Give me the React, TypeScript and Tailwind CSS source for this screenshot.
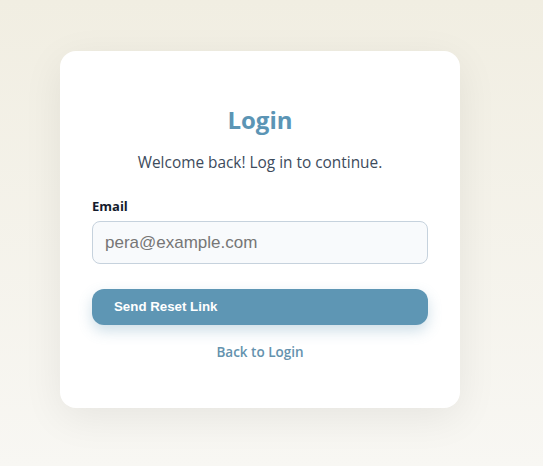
import * as React from "react";

export default function App() {
  const [email, setEmail] = React.useState("");

  return (
    <div className="min-h-screen w-full bg-gradient-to-b from-[#f1eee2] to-[#f8f7f3] pt-[51px] pl-[60px] font-['Open_Sans','Noto_Sans',sans-serif]">
      <div className="w-[400px] rounded-2xl bg-white px-8 pt-[53px] pb-[45px] shadow-[0_10px_40px_rgba(0,0,0,0.07)]">
        <h2 className="text-center text-[24px] leading-8 font-bold text-[#5b95b5]">
          Login
        </h2>
        <p className="mt-[15px] text-center text-[15.4px] leading-6 text-[#3d4b5c]">
          Welcome back! Log in to continue.
        </p>

        <form className="mt-[21px]" onSubmit={(e) => e.preventDefault()}>
          <label className="block text-[13px] leading-5 font-bold text-[#141b2d]">
            Email
          </label>
          <input
            type="email"
            value={email}
            onChange={(e) => setEmail(e.target.value)}
            placeholder="pera@example.com"
            className="mt-[5px] block h-[43px] w-full rounded-lg border border-[#c6d2dd] bg-[#f8fafc] px-3 font-['Liberation_Sans',Arial,sans-serif] text-[17px] text-[#333] placeholder:text-[#767676] outline-none"
          />
          <button
            type="submit"
            className="mt-[25px] block h-9 w-full rounded-xl bg-[#5e96b4] px-[22px] text-left font-['Liberation_Sans',Arial,sans-serif] text-[13.3px] font-bold text-white shadow-[0_6px_14px_rgba(94,150,180,0.3)]"
          >
            Send Reset Link
          </button>
        </form>

        <div className="mt-[14px] text-center">
          <a href="#" className="text-[13.5px] leading-5 font-semibold text-[#6492ae]">
            Back to Login
          </a>
        </div>
      </div>
    </div>
  );
}
